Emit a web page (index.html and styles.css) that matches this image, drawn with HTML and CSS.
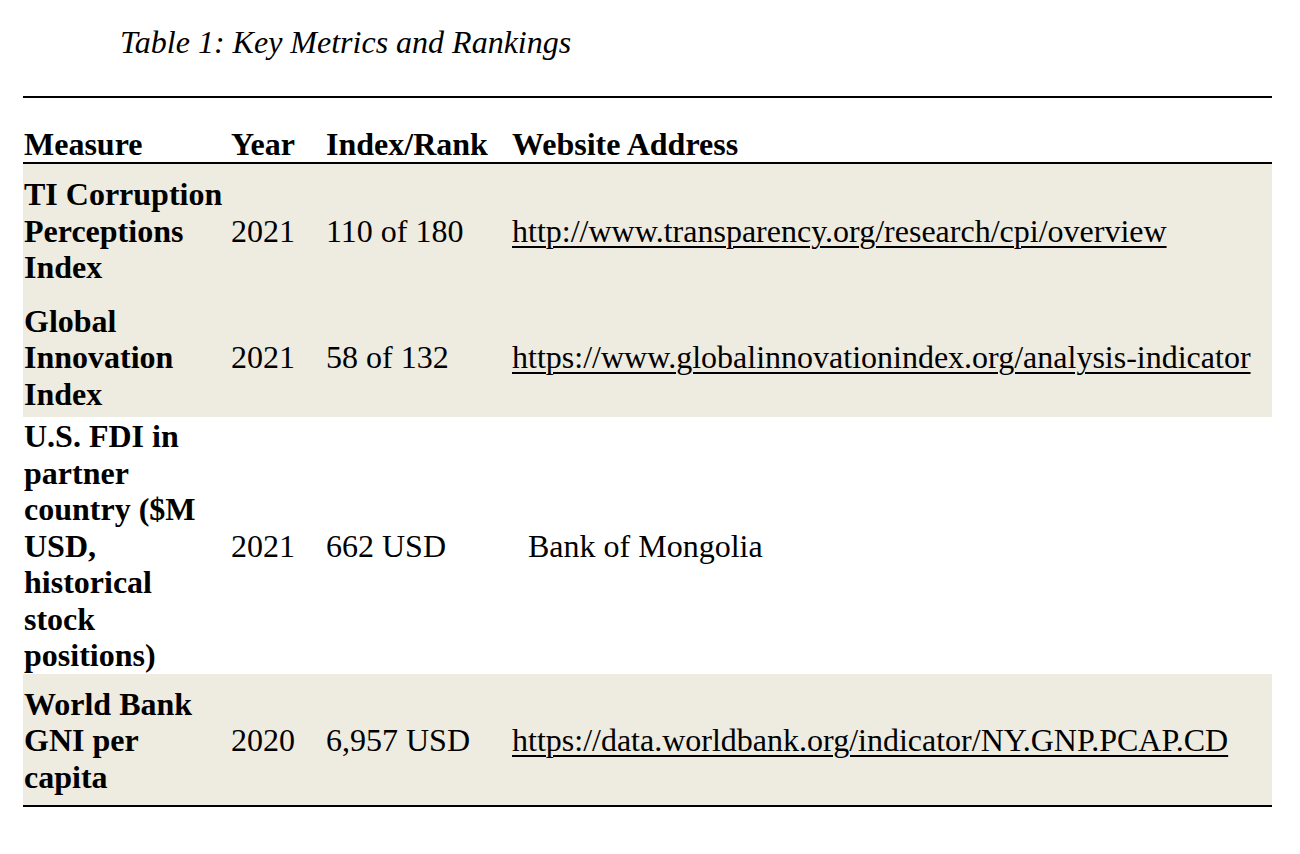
FILE: index.html
```html
<!DOCTYPE html>
<html lang="en">
<head>
<meta charset="utf-8">
<title>Table 1: Key Metrics and Rankings</title>
<link rel="stylesheet" href="styles.css">
</head>
<body>
<div class="page">
  <p class="caption">Table 1: Key Metrics and Rankings</p>
  <table class="metrics">
    <colgroup>
      <col class="c-measure">
      <col class="c-year">
      <col class="c-rank">
      <col class="c-site">
    </colgroup>
    <thead>
      <tr>
        <th>Measure</th>
        <th>Year</th>
        <th>Index/Rank</th>
        <th>Website Address</th>
      </tr>
    </thead>
    <tbody>
      <tr class="shaded r1">
        <td class="measure">TI Corruption Perceptions Index</td>
        <td>2021</td>
        <td>110 of 180</td>
        <td><a href="#">http://www.transparency.org/research/cpi/overview</a></td>
      </tr>
      <tr class="shaded r2">
        <td class="measure">Global Innovation Index</td>
        <td>2021</td>
        <td>58 of 132</td>
        <td><a href="#">https://www.globalinnovationindex.org/analysis-indicator</a></td>
      </tr>
      <tr class="r3">
        <td class="measure">U.S. FDI in partner country ($M USD, historical stock positions)</td>
        <td>2021</td>
        <td>662 USD</td>
        <td class="indent">Bank of Mongolia</td>
      </tr>
      <tr class="shaded r4">
        <td class="measure">World Bank GNI per capita</td>
        <td>2020</td>
        <td>6,957 USD</td>
        <td><a href="#">https://data.worldbank.org/indicator/NY.GNP.PCAP.CD</a></td>
      </tr>
    </tbody>
  </table>
</div>
</body>
</html>
```

FILE: styles.css
```css
html, body {
  margin: 0;
  padding: 0;
  background: #ffffff;
}

body {
  font-family: "Liberation Serif", "Times New Roman", serif;
  font-size: 32px;
  line-height: 36.5px;
  color: #000000;
}

.page {
  padding: 24px 0 0 23px;
  width: 1249px;
}

.caption {
  margin: 0;
  padding-left: 97px;
  font-style: italic;
}

.metrics {
  margin-top: 35px;
  width: 1249px;
  table-layout: fixed;
  border-collapse: collapse;
  border-spacing: 0;
  border-top: 2px solid #000;
  border-bottom: 2px solid #000;
}

.c-measure { width: 207px; }
.c-year { width: 95px; }
.c-rank { width: 186px; }
.c-site { width: 761px; }

.metrics th {
  font-weight: bold;
  text-align: left;
  padding: 28px 0 0 1px;
  border-bottom: 2px solid #000;
  vertical-align: bottom;
  white-space: nowrap;
}

.metrics td {
  vertical-align: middle;
  text-align: left;
  padding: 0 0 0 1px;
}

.metrics td.measure {
  font-weight: bold;
  padding-left: 1px;
  padding-right: 4px;
}

.shaded td {
  background: #eeebe1;
}

.r1 td, .r2 td {
  padding-top: 12px;
  padding-bottom: 5px;
}

.r3 td {
  padding-top: 1px;
  padding-bottom: 0;
}

.r4 td {
  padding-top: 12px;
  padding-bottom: 10px;
}

.metrics td.indent {
  padding-left: 17px;
}

.metrics a {
  color: #000;
  text-decoration: underline;
  text-decoration-thickness: 2px;
  text-underline-offset: 4px;
  white-space: nowrap;
}
```
